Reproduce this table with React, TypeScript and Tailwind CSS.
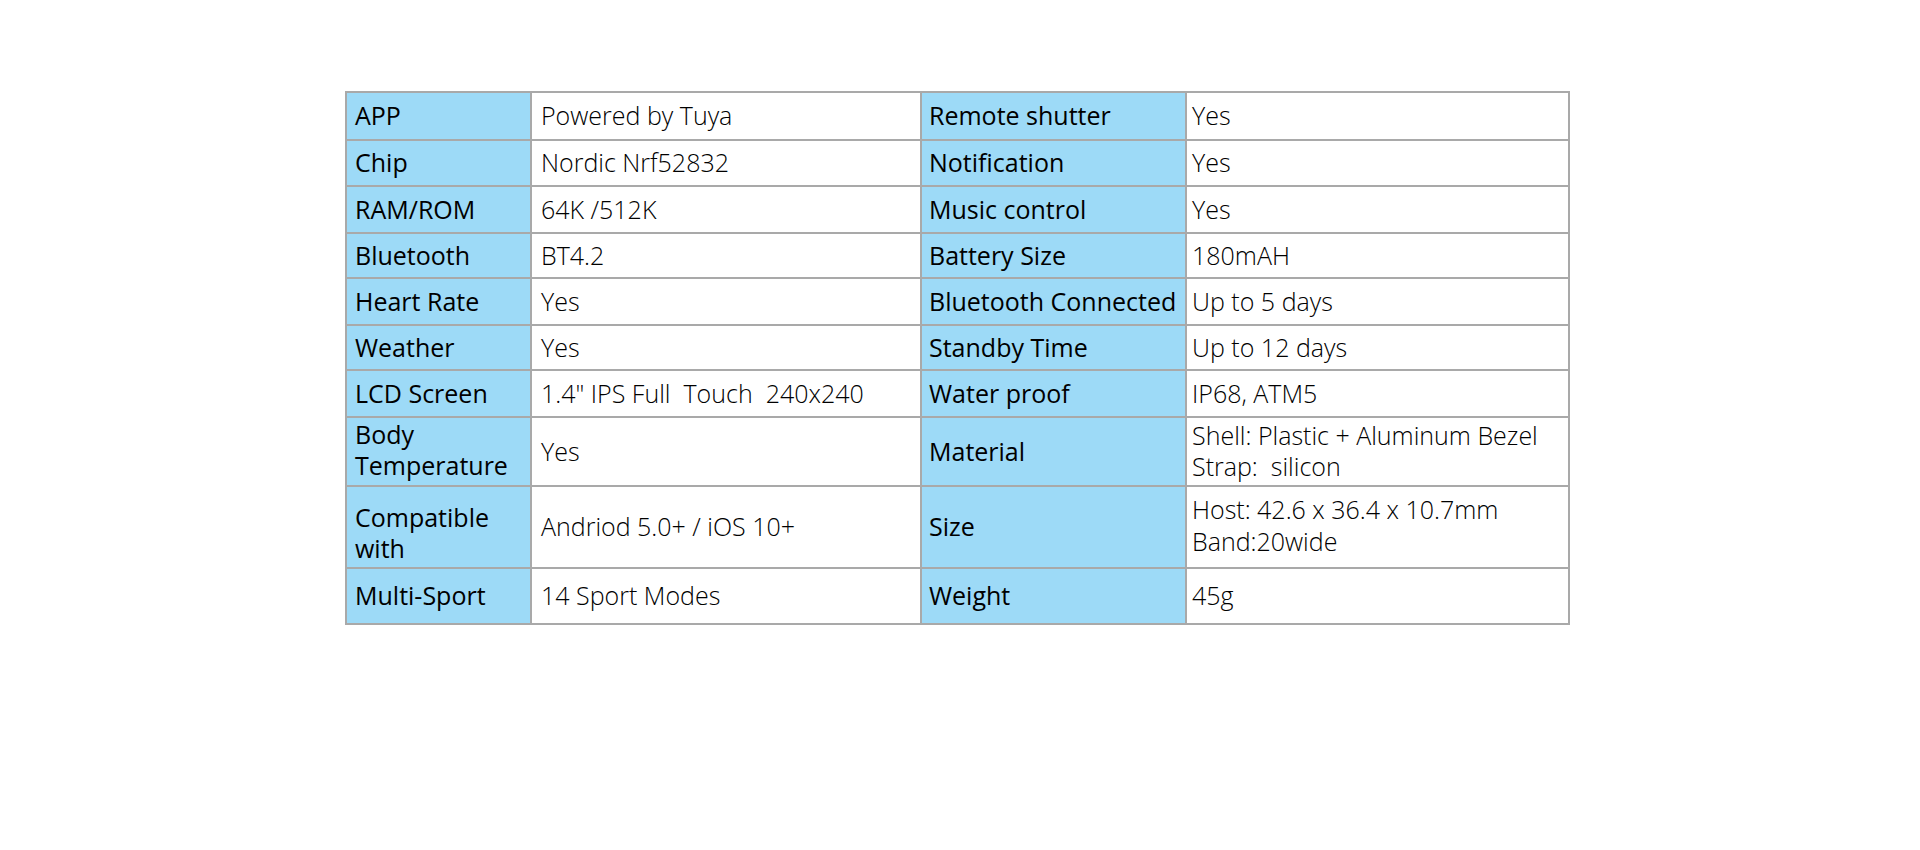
import React from "react";

type Row = {
  h: number;
  a: React.ReactNode;
  b: React.ReactNode;
  c: React.ReactNode;
  d: React.ReactNode;
};

const rows: Row[] = [
  { h: 48, a: "APP", b: "Powered by Tuya", c: "Remote shutter", d: "Yes" },
  { h: 46, a: "Chip", b: "Nordic Nrf52832", c: "Notification", d: "Yes" },
  { h: 47, a: "RAM/ROM", b: "64K /512K", c: "Music control", d: "Yes" },
  { h: 45, a: "Bluetooth", b: "BT4.2", c: "Battery Size", d: "180mAH" },
  { h: 47, a: "Heart Rate", b: "Yes", c: "Bluetooth Connected", d: "Up to 5 days" },
  { h: 45, a: "Weather", b: "Yes", c: "Standby Time", d: "Up to 12 days" },
  { h: 47, a: "LCD Screen", b: "1.4\" IPS Full  Touch  240x240", c: "Water proof", d: "IP68, ATM5" },
  {
    h: 69,
    a: (
      <span className="block leading-[31px] pb-[4px]">
        Body
        <br />
        Temperature
      </span>
    ),
    b: "Yes",
    c: "Material",
    d: (
      <span className="block leading-[31px] pb-[2px]">
        Shell: Plastic + Aluminum Bezel
        <br />
        Strap:&nbsp; silicon
      </span>
    ),
  },
  {
    h: 82,
    a: (
      <span className="block leading-[31px] pt-[12px]">
        Compatible
        <br />
        with
      </span>
    ),
    b: "Andriod 5.0+ / iOS 10+",
    c: "Size",
    d: (
      <span className="block leading-[32px] pb-[4px]">
        Host: 42.6 x 36.4 x 10.7mm
        <br />
        Band:20wide
      </span>
    ),
  },
  { h: 56, a: "Multi-Sport", b: "14 Sport Modes", c: "Weight", d: "45g" },
];

export default function App() {
  return (
    <div
      className="w-[1920px] h-[850px] bg-white pl-[345px] pt-[91px]"
      style={{ fontFamily: "'Open Sans', Lato, 'Noto Sans', sans-serif" }}
    >
      <table className="border-collapse border-2 border-[#a9a9a9] text-[25px] text-black">
        <colgroup>
          <col className="w-[185px]" />
          <col className="w-[390px]" />
          <col className="w-[265px]" />
          <col className="w-[383px]" />
        </colgroup>
        <tbody>
          {rows.map((r, i) => (
            <tr key={i} style={{ height: r.h }}>
              <td className="border-2 border-[#a9a9a9] bg-[#9ddaf7] pl-[8px] pr-0 py-0 align-middle whitespace-nowrap leading-tight">
                {r.a}
              </td>
              <td className="border-2 border-[#a9a9a9] bg-white pl-[9px] py-0 align-middle whitespace-pre font-light leading-tight">
                {r.b}
              </td>
              <td className="border-2 border-[#a9a9a9] bg-[#9ddaf7] pl-[7px] pr-0 py-0 align-middle whitespace-nowrap leading-tight">
                {r.c}
              </td>
              <td className="border-2 border-[#a9a9a9] bg-white pl-[5px] py-0 align-middle whitespace-nowrap font-light leading-tight">
                {r.d}
              </td>
            </tr>
          ))}
        </tbody>
      </table>
    </div>
  );
}
